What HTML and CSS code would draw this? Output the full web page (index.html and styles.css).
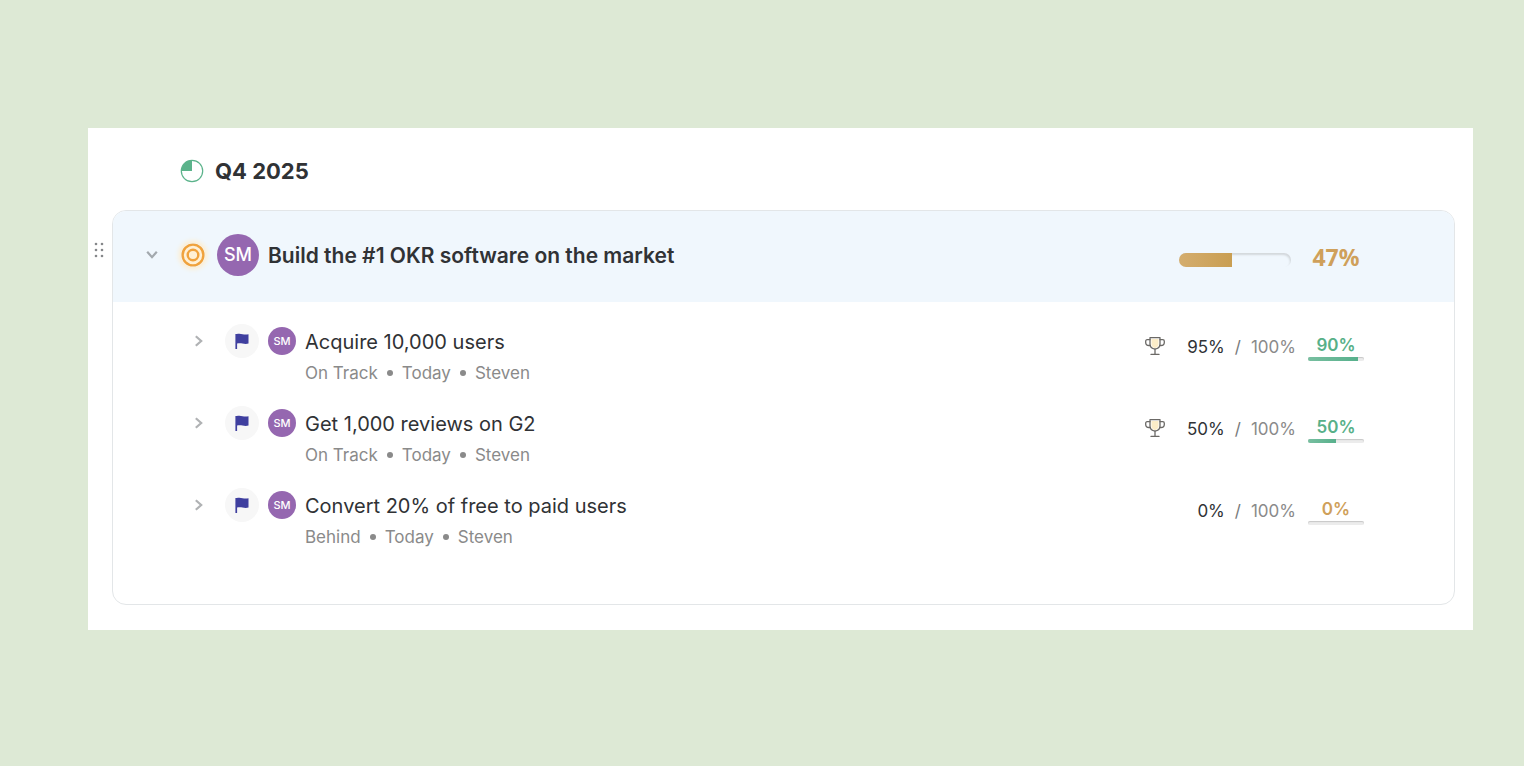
FILE: index.html
```html
<!DOCTYPE html>
<html lang="en">
<head>
  <meta charset="UTF-8">
  <title>Q4 2025 - OKRs</title>
  <meta name="viewport" content="width=device-width, initial-scale=1.0">
  <link rel="stylesheet" href="styles.css">
</head>
<body>

<!-- shared icons -->
<svg class="sprite" aria-hidden="true">
  <symbol id="chevron" viewBox="0 0 12 12">
    <path d="M2.8 1.2 8.2 6l-5.4 4.8" fill="none" stroke="currentColor" stroke-width="2.2"/>
  </symbol>
  <symbol id="flag" viewBox="0 0 14 16">
    <path d="M.4.9h1.3v.2c2.200-.6 4-.4 5.900.1 2 .5 3.900.500 5.900 0v9.400c-2.200.6-4 .4-6 0-1.900-.400-3.600-.5-5.400 0V16H.4z" fill="currentColor"/>
  </symbol>
  <symbol id="trophy" viewBox="0 0 20 20">
    <path d="M6.500 3h7v6c-.5 1.800-1.800 2.700-3.500 3-1.700-.3-3-1.200-3.500-3z" fill="#fbecc8"/>
    <g fill="none" stroke="#6b6966" stroke-width="1.300" stroke-linecap="round" stroke-linejoin="round">
      <path d="M5 1.600h10v6.600c0 2.800-2 4.400-5 5-3-.6-5-2.200-5-5z"/>
      <path d="M5 3.700H2.200c-1 0-1.500.6-1.500 1.500v1.300c0 1.800 1.300 3 3.300 3h1.300M15 3.700h2.800c1 0 1.500.6 1.500 1.500v1.300c0 1.800-1.300 3-3.300 3h-1.300"/>
      <path d="M10 13.200v5M6 18.400h8"/>
    </g>
  </symbol>
</svg>

<main class="panel">
  <div class="period">
    <svg class="period-icon" viewBox="0 0 24 24" aria-hidden="true">
      <circle cx="12" cy="12" r="10.700" fill="#fff" stroke="#5bb38b" stroke-width="1.200"/>
      <path d="M12 12H1.300A10.700 10.700 0 0 1 12 1.300z" fill="#5bb38b"/>
    </svg>
    <h1>Q4 2025</h1>
  </div>

  <div class="objective">
    <button class="handle" aria-label="Reorder objective">
      <svg viewBox="0 0 10 16" width="10" height="16" fill="#85878a">
        <circle cx="2" cy="2" r="1.300"/><circle cx="8" cy="2" r="1.300"/>
        <circle cx="2" cy="8" r="1.300"/><circle cx="8" cy="8" r="1.300"/>
        <circle cx="2" cy="14" r="1.300"/><circle cx="8" cy="14" r="1.300"/>
      </svg>
    </button>

    <section class="card">
      <header class="card-header">
        <button class="toggle open" aria-label="Collapse"><svg><use href="#chevron"/></svg></button>
        <svg class="target" viewBox="0 0 24 24" aria-hidden="true">
          <circle cx="12" cy="12" r="11" fill="#fff0d5"/>
          <g fill="none" stroke="#f0a23c" stroke-width="2.400">
            <circle cx="12" cy="12" r="10.400"/>
            <circle cx="12" cy="12" r="5.300"/>
          </g>
        </svg>
        <span class="avatar large">SM</span>
        <h2>Build the #1 OKR software on the market</h2>
        <div class="overall">
          <div class="bar"><div class="bar-fill" style="width:47%"></div></div>
          <span class="overall-value">47%</span>
        </div>
      </header>

      <ul class="results">
        <li class="result">
          <button class="toggle" aria-label="Expand"><svg><use href="#chevron"/></svg></button>
          <span class="flag"><svg><use href="#flag"/></svg></span>
          <span class="avatar">SM</span>
          <div class="info">
            <h3>Acquire 10,000 users</h3>
            <p class="meta"><span>On Track</span><i></i><span>Today</span><i></i><span>Steven</span></p>
          </div>
          <div class="numbers">
            <svg class="trophy"><use href="#trophy"/></svg>
            <span class="current">95%</span>
            <span class="slash">/</span>
            <span class="goal">100%</span>
            <div class="score good">
              <span>90%</span>
              <div class="mini-bar"><div class="mini-fill" style="width:90%"></div></div>
            </div>
          </div>
        </li>
        <li class="result">
          <button class="toggle" aria-label="Expand"><svg><use href="#chevron"/></svg></button>
          <span class="flag"><svg><use href="#flag"/></svg></span>
          <span class="avatar">SM</span>
          <div class="info">
            <h3>Get 1,000 reviews on G2</h3>
            <p class="meta"><span>On Track</span><i></i><span>Today</span><i></i><span>Steven</span></p>
          </div>
          <div class="numbers">
            <svg class="trophy"><use href="#trophy"/></svg>
            <span class="current">50%</span>
            <span class="slash">/</span>
            <span class="goal">100%</span>
            <div class="score good">
              <span>50%</span>
              <div class="mini-bar"><div class="mini-fill" style="width:50%"></div></div>
            </div>
          </div>
        </li>
        <li class="result">
          <button class="toggle" aria-label="Expand"><svg><use href="#chevron"/></svg></button>
          <span class="flag"><svg><use href="#flag"/></svg></span>
          <span class="avatar">SM</span>
          <div class="info">
            <h3>Convert 20% of free to paid users</h3>
            <p class="meta"><span>Behind</span><i></i><span>Today</span><i></i><span>Steven</span></p>
          </div>
          <div class="numbers">
            <span class="current">0%</span>
            <span class="slash">/</span>
            <span class="goal">100%</span>
            <div class="score behind">
              <span>0%</span>
              <div class="mini-bar"><div class="mini-fill" style="width:0%"></div></div>
            </div>
          </div>
        </li>
      </ul>
    </section>
  </div>
</main>

</body>
</html>
```
FILE: styles.css
```css
* {
  box-sizing: border-box;
}

body {
  margin: 0;
  padding: 128px 51px 128px 88px;
  background: #dde9d5;
  color: #303235;
  font-family: Inter, "Liberation Sans", sans-serif;
}

h1, h2, h3, p, ul {
  margin: 0;
  padding: 0;
}

button {
  padding: 0;
  border: none;
  background: none;
  cursor: pointer;
}

.sprite {
  display: none;
}

.panel {
  background: #fff;
  padding: 28px 18px 25px 0;
}

.period {
  display: flex;
  align-items: center;
  gap: 11px;
  height: 30px;
  margin: 0 0 24px 92px;
}

.period-icon {
  width: 24px;
  height: 24px;
}

.period h1 {
  font-size: 22px;
  line-height: 30px;
  font-weight: 700;
}

.objective {
  display: flex;
  align-items: flex-start;
}

.handle {
  width: 22px;
  height: 16px;
  margin: 32px 2px 0 0;
  flex: none;
  line-height: 0;
}

.card {
  flex: 1;
  border: 1px solid #e3e6e8;
  border-radius: 14px;
  overflow: hidden;
}

.card-header {
  display: flex;
  align-items: center;
  height: 91px;
  padding: 0 90px 4px 33px;
  background: #f0f7fd;
}

.toggle {
  width: 12px;
  height: 12px;
  color: #b0b2b4;
  line-height: 0;
  flex: none;
}

.toggle svg {
  width: 12px;
  height: 12px;
}

.toggle.open {
  transform: rotate(90deg);
  color: #a3a9ae;
}

.target {
  width: 24px;
  height: 24px;
  margin: 0 12px 0 23px;
  border-radius: 50%;
  overflow: visible;
  box-shadow: 0 0 5px 2px #ffecc9;
}

.avatar {
  display: flex;
  align-items: center;
  justify-content: center;
  flex: none;
  width: 28px;
  height: 28px;
  border-radius: 50%;
  background: #9567b0;
  color: #fff;
  font-size: 11px;
  font-weight: 500;
}

.avatar.large {
  width: 42px;
  height: 42px;
  font-size: 18px;
}

.card-header h2 {
  margin-left: 9px;
  padding-top: 2px;
  font-size: 21px;
  line-height: 28px;
  font-weight: 600;
}

.overall {
  display: flex;
  align-items: center;
  gap: 17px;
  margin-left: auto;
  padding-top: 10px;
}

.bar {
  width: 112px;
  height: 14px;
  border-radius: 7px;
  overflow: hidden;
  box-shadow: inset -1px 2px 2px #d3d8dc;
}

.bar-fill {
  height: 100%;
  background: linear-gradient(90deg, #d4ad6e, #c99e52);
}

.overall-value {
  width: 56px;
  padding-bottom: 5px;
  text-align: center;
  color: #cfa05a;
  font-family: "Noto Sans", sans-serif;
  font-size: 23px;
  line-height: 28px;
  font-weight: 700;
}

.results {
  list-style: none;
  padding: 22px 90px 34px 80px;
}

.result {
  display: flex;
  align-items: flex-start;
  padding-bottom: 21px;
}

.result .toggle {
  margin-top: 11px;
}

.flag {
  display: flex;
  align-items: center;
  justify-content: center;
  width: 34px;
  height: 34px;
  margin: 0 9px 0 20px;
  border-radius: 50%;
  background: #f7f7f7;
  color: #3f3f9f;
}

.flag svg {
  width: 14px;
  height: 16px;
}

.result .avatar {
  margin-top: 3px;
}

.info {
  margin-left: 9px;
}

.info h3 {
  font-size: 20px;
  line-height: 36px;
  font-weight: 400;
}

.meta {
  display: flex;
  align-items: center;
  gap: 9px;
  margin-top: 1px;
  color: #8a8a8a;
  font-size: 17px;
  line-height: 24px;
}

.meta i {
  width: 6px;
  height: 6px;
  border-radius: 50%;
  background: #8a8a8a;
}

.numbers {
  display: flex;
  align-items: center;
  height: 26px;
  margin: 10px 0 0 auto;
  font-size: 17px;
}

.trophy {
  width: 20px;
  height: 20px;
  margin: 0 22px 2px 0;
}

.slash {
  margin: 0 10px;
  color: #77797b;
}

.goal {
  color: #8a8a8a;
}

.score {
  width: 56px;
  margin-left: 12px;
  text-align: center;
  font-size: 17px;
  line-height: 23px;
  font-weight: 600;
}

.score span {
  display: block;
}

.mini-bar {
  height: 4px;
  border-radius: 2px;
  overflow: hidden;
  background: #ececec;
  box-shadow: inset 0 1px 1px #c8c8c8;
}

.mini-fill {
  height: 100%;
}

.good {
  color: #57b088;
}

.good .mini-fill {
  background: linear-gradient(90deg, #78bfa0, #57b08c);
}

.behind {
  color: #cfa05a;
}
```
